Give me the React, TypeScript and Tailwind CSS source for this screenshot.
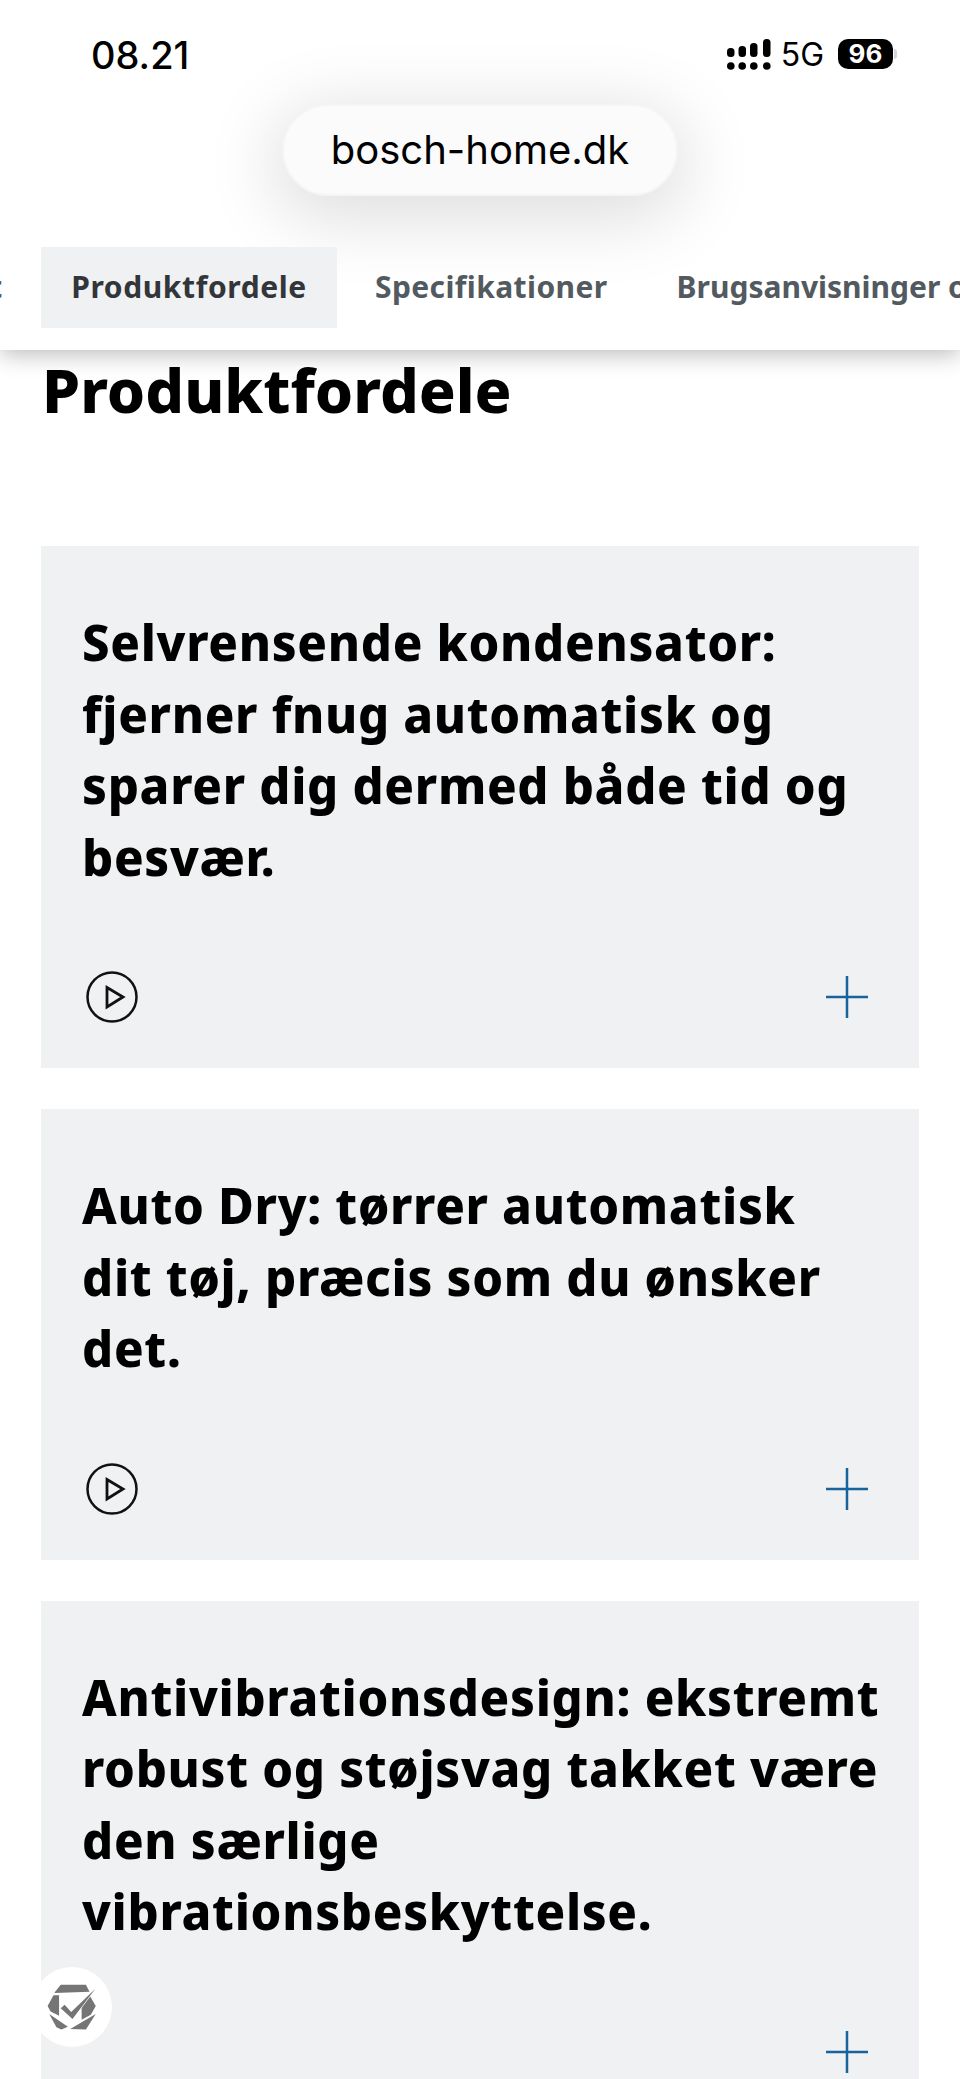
import React from "react";

const cards = [
  {
    lines: ["Selvrensende kondensator:", "fjerner fnug automatisk og", "sparer dig dermed både tid og", "besvær."],
    video: true,
  },
  {
    lines: ["Auto Dry: tørrer automatisk", "dit tøj, præcis som du ønsker", "det."],
    video: true,
  },
  {
    lines: ["Antivibrationsdesign: ekstremt", "robust og støjsvag takket være", "den særlige", "vibrationsbeskyttelse."],
    video: false,
  },
];

const SignalIcon = () => (
  <svg width="44" height="31" viewBox="0 0 44 31" fill="black">
    <rect x="0" y="9" width="7.5" height="9" rx="3.5" />
    <rect x="11.5" y="7" width="7.5" height="11" rx="3.5" />
    <rect x="23" y="4" width="7.5" height="14" rx="3.5" />
    <rect x="36" y="0" width="7.5" height="18" rx="3.5" />
    <circle cx="3.8" cy="27" r="3.8" />
    <circle cx="15.2" cy="27" r="3.8" />
    <circle cx="26.8" cy="27" r="3.8" />
    <circle cx="39.8" cy="27" r="3.8" />
  </svg>
);

const PlayIcon = () => (
  <svg width="52" height="52" viewBox="0 0 52 52" fill="none" stroke="#111" strokeWidth="2.5">
    <circle cx="26" cy="26" r="24.5" />
    <path d="M21 16.5 L37 26 L21 36 Z" strokeWidth="2.8" />
  </svg>
);

const PlusIcon = () => (
  <svg width="42" height="42" viewBox="0 0 42 42" fill="none" stroke="#18639b" strokeWidth="2.5">
    <path d="M21 0 V42 M0 21 H42" />
  </svg>
);

const BadgeLogo = () => (
  <svg width="54" height="51" viewBox="130 125 165 155" fill="#757575">
    <polygon points="178,133 255,133 266,154 158,158" />
    <polygon points="156,165 173,165 173,228 147,215 138,198" />
    <polygon points="143,222 200,261 180,270 165,263" />
    <polygon points="207,268 285,222 255,270" />
    <polygon points="242,190 266,165 285,198 270,225 242,240" />
    <polygon points="178,205 190,194 210,216 284,145 214,238" stroke="white" strokeWidth="4" paintOrder="stroke" />
  </svg>
);

export default function App() {
  return (
    <div className="relative h-[2079px] w-[960px] overflow-hidden bg-white font-['Noto_Sans',sans-serif] text-black">
      <header className="relative z-10 flex h-[350px] flex-col overflow-hidden bg-white shadow-[0_4px_22px_rgba(0,0,0,0.28)]">
        <div className="mt-[37px] flex h-[34px] items-center justify-between pl-[91px] pr-[63px] font-['Inter',sans-serif]">
          <span className="pt-[2px] text-[38px] font-medium">08.21</span>
          <div className="flex items-center">
            <SignalIcon />
            <span className="ml-[10px] pt-[2px] text-[32px] leading-none">5G</span>
            <span className="ml-[14px] flex h-[30px] w-[55px] items-center justify-center rounded-[10px] bg-black text-[26px] font-bold leading-none text-white">
              96
            </span>
            <span className="ml-[1px] h-[10px] w-[3px] rounded-r-full bg-gray-300" />
          </div>
        </div>

        <div className="mx-auto mt-[33px] flex h-[92px] w-[396px] items-center justify-center rounded-full border-2 border-[#f5f5f5] bg-[#fbfbfb] font-['Inter',sans-serif] text-[40px] shadow-[0_14px_70px_10px_rgba(0,0,0,0.13)]">
          bosch-home.dk
        </div>

        <nav className="mt-[51px] ml-[-165px] flex h-[81px] items-center gap-[6px] whitespace-nowrap text-[30px] font-bold tracking-[0.6px] text-[#525a5f]">
          <span className="flex h-[81px] w-[200px] shrink-0 items-center justify-end overflow-hidden pb-[2px] pr-[32px]">
            Oversigt
          </span>
          <span className="flex h-[81px] w-[296px] shrink-0 items-center justify-center bg-[#eff1f2] pb-[2px] text-[#323539]">
            Produktfordele
          </span>
          <span className="flex h-[81px] shrink-0 items-center pb-[2px] pl-[32px] pr-[31px] tracking-[0.4px]">Specifikationer</span>
          <span className="flex h-[81px] shrink-0 items-center pb-[2px] pl-[32px] tracking-normal">Brugsanvisninger og dokumenter</span>
        </nav>
      </header>

      <main className="px-[41px] pt-[4px]">
        <h1 className="pl-[1px] text-[61px] font-extrabold leading-[72px]">Produktfordele</h1>
        <div className="mt-[120px] flex flex-col gap-[41px]">
          {cards.map((card) => (
            <section key={card.lines[0]} className="bg-[#eff1f2] px-[41px] pt-[61px] pb-[45px]">
              <h2 className="whitespace-nowrap text-[49px] font-extrabold leading-[71.5px] tracking-[0.7px]">
                {card.lines.map((line) => (
                  <span key={line} className="block">
                    {line}
                  </span>
                ))}
              </h2>
              <div className="mt-[78px] flex h-[52px] items-center justify-between pl-[4px] pr-[10px]">
                {card.video ? <PlayIcon /> : <span />}
                <PlusIcon />
              </div>
            </section>
          ))}
        </div>
      </main>

      <div className="absolute left-[32px] top-[1967px] z-20 flex h-[80px] w-[80px] items-center justify-center rounded-full bg-white">
        <BadgeLogo />
      </div>
    </div>
  );
}
